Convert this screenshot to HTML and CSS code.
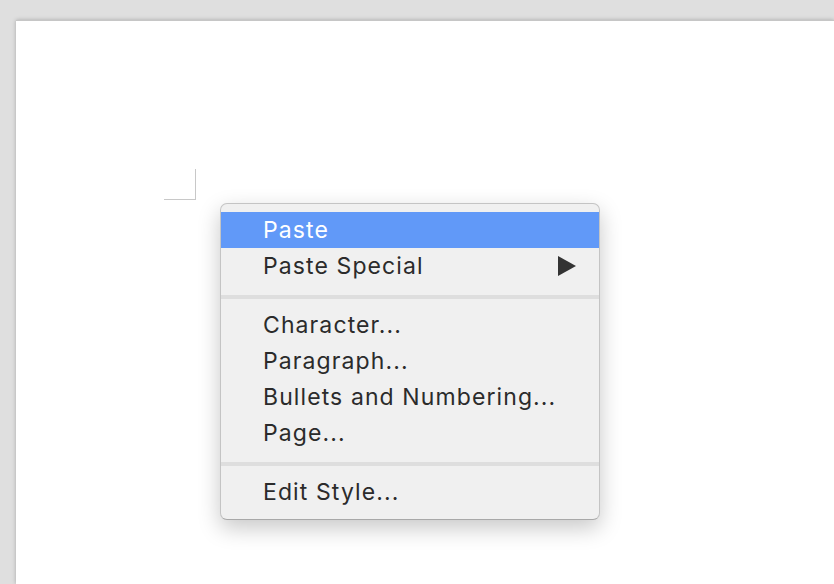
FILE: index.html
```html
<!DOCTYPE html>
<html lang="en">
<head>
  <meta charset="UTF-8">
  <title>Document</title>
  <link rel="stylesheet" href="styles.css">
</head>
<body>
  <div class="page">
    <div class="corner-mark"></div>
  </div>

  <ul class="context-menu">
    <li class="item active">Paste</li>
    <li class="item has-sub">Paste Special <span class="arrow"></span></li>
    <li class="separator"></li>
    <li class="item">Character...</li>
    <li class="item">Paragraph...</li>
    <li class="item">Bullets and Numbering...</li>
    <li class="item">Page...</li>
    <li class="separator"></li>
    <li class="item">Edit Style...</li>
  </ul>
</body>
</html>
```

FILE: styles.css
```css
html, body {
  margin: 0;
  height: 100%;
  overflow: hidden;
}
body {
  background-color: #dfdfdf;
  font-family: Inter, "Noto Sans", sans-serif;
}
.page {
  margin: 20px 0 0 16px;
  height: calc(100vh - 20px);
  padding: 148px 0 0 148px;
  background: #fff;
  border-top: 1px solid #c6c6c6;
  box-shadow: 0 0 4px rgba(0, 0, 0, 0.25);
  box-sizing: border-box;
}
.corner-mark {
  width: 31px;
  height: 30px;
  border-right: 1px solid #c8c8c8;
  border-bottom: 1px solid #c8c8c8;
}
.context-menu {
  position: absolute;
  left: 220px;
  top: 203px;
  width: 380px;
  box-sizing: border-box;
  margin: 0;
  padding: 8px 0 9px;
  list-style: none;
  background: #f0f0f0;
  border: 1px solid #c4c4c4;
  border-bottom-color: #a8a8a8;
  border-radius: 7px;
  box-shadow: 0 8px 22px rgba(0, 0, 0, 0.22);
}
.item {
  display: flex;
  align-items: center;
  justify-content: space-between;
  height: 36px;
  padding: 0 23px 0 42px;
  font-size: 23px;
  letter-spacing: 1.1px;
  color: #2b2b2b;
}
.item.active {
  background-color: #6199f8;
  color: #fff;
}
.arrow {
  width: 0;
  height: 0;
  border-top: 10px solid transparent;
  border-bottom: 10px solid transparent;
  border-left: 18px solid #333;
}
.separator {
  height: 4px;
  margin: 11px 0 8px;
  background: #dedede;
}
```
